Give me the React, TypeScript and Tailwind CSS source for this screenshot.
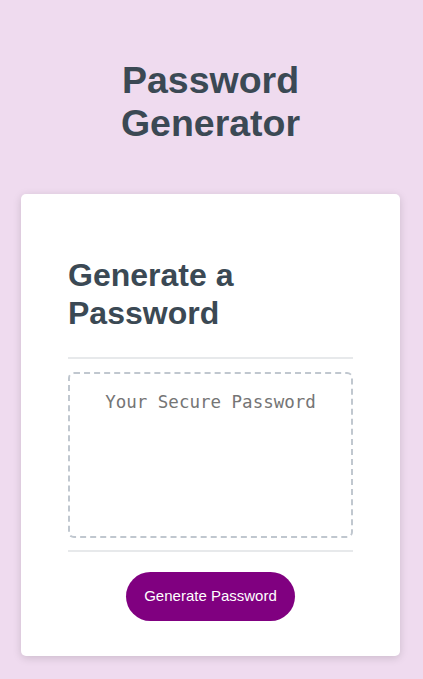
export default function App() {
  return (
    <div
      className="min-h-screen w-full bg-[#efdbef] pt-[59px] pb-[23px] pl-[21px] pr-[23px]"
      style={{ fontFamily: '"Liberation Sans", Arial, sans-serif' }}
    >
      <h1 className="text-center font-bold text-[37.5px] leading-[43px] text-[#3b4954]">
        Password
        <br />
        Generator
      </h1>
      <div className="mt-[49px] bg-white rounded-[5px] shadow-[0_2px_8px_0_rgba(0,0,0,0.15)] px-[47px] pt-[62px] pb-[35px] text-[#3b4954]">
        <h2 className="font-bold text-[32px] leading-[38px]">Generate a Password</h2>
        <div className="mt-[25px] h-[2px] w-full bg-[#e7e9eb]" />
        <textarea
          readOnly
          placeholder="Your Secure Password"
          className="mt-[13px] block w-full h-[166px] resize-none overflow-hidden border-2 border-dashed border-[#c0c7cf] rounded-[6px] px-[15px] pt-[15px] text-center text-[17.5px] placeholder:text-[#757575] outline-none"
          style={{ fontFamily: '"DejaVu Sans Mono", monospace' }}
        />
        <div className="mt-[12px] h-[2px] w-full bg-[#e7e9eb]" />
        <div className="flex justify-center mt-[20px]">
          <button className="rounded-full bg-[#800080] text-white text-[15px] leading-[17px] px-[18px] pt-[15px] pb-[17px]">
            Generate Password
          </button>
        </div>
      </div>
    </div>
  );
}
